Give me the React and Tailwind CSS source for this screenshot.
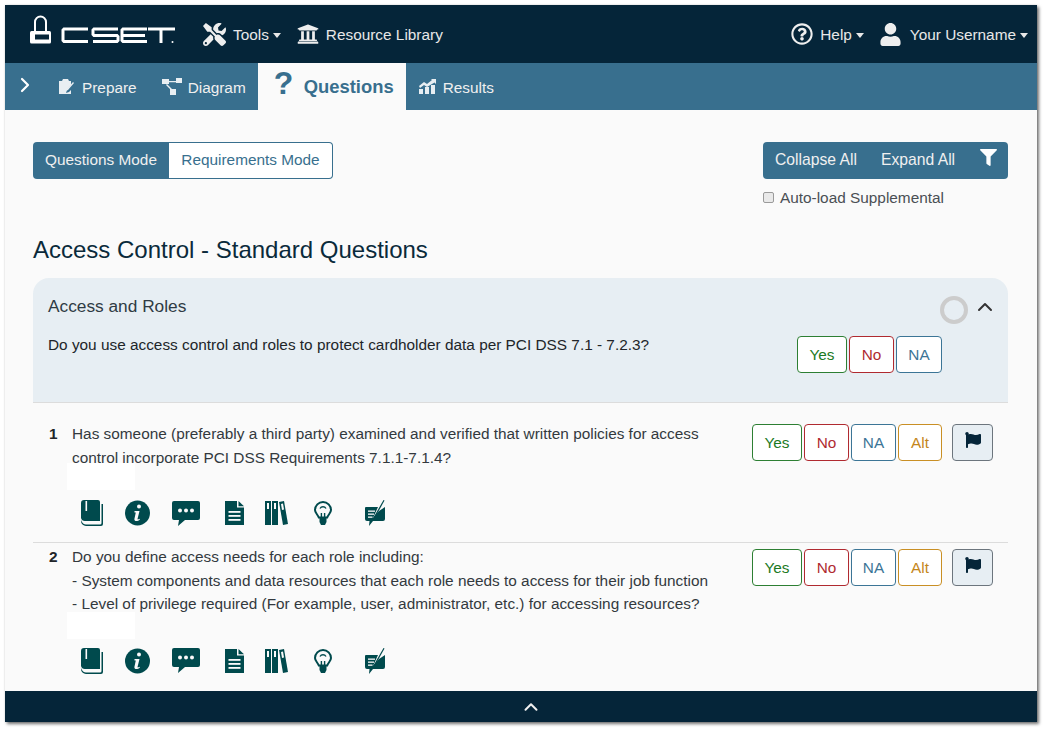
import { ChevronRight, ChevronUp } from "lucide-react";
import { FaTools, FaUniversity, FaRegQuestionCircle, FaUser, FaFilter, FaFlag } from "react-icons/fa";

const Caret = () => (
  <span className="ml-[4px] mt-[2px] inline-block h-0 w-0 border-x-[4.5px] border-t-[5px] border-x-transparent border-t-current" />
);

const CsetLogo = () => (
  <svg width="146" height="32" viewBox="0 0 146 32" fill="none" stroke="white" aria-label="CSET">
    <path d="M5 16V7a5.500 5.500 0 0 1 11 0v9" strokeWidth="2" />
    <rect x="0" y="16" width="21" height="12.500" rx="1.500" fill="white" stroke="none" />
    <rect x="5" y="19.500" width="14" height="5" fill="#052539" stroke="none" />
    <polyline points="58,14 34,14 33,15 33,25.500 34,26.500 58,26.500" strokeWidth="3" />
    <polyline points="88,14 64,14 63,15 63,19.500 64,20.500 87,20.500 88,21.500 88,25.500 87,26.500 63,26.500" strokeWidth="3" />
    <polyline points="117,14 93,14 92,15 92,25.500 93,26.500 117,26.500" strokeWidth="3" />
    <line x1="92" y1="20.500" x2="115" y2="20.500" strokeWidth="3" />
    <line x1="118" y1="14" x2="145" y2="14" strokeWidth="3" />
    <line x1="131" y1="14" x2="131" y2="28" strokeWidth="3" />
    <circle cx="142.500" cy="27" r="1" fill="white" stroke="none" />
  </svg>
);

const PrepareIcon = () => (
  <svg width="16" height="16" viewBox="0 0 16 16" fill="#e8eef2">
    <path d="M1 2h3l1-2h5l1 2h2v4l-4 5-1 3 3-1 2-2v4H1z" />
    <path d="M15 3l1 1-6 7-2 1 1-2z" />
  </svg>
);

const DiagramIcon = () => (
  <svg width="20" height="17" viewBox="0 0 20 17" fill="#e8eef2">
    <rect x="0" y="1" width="7" height="5" />
    <rect x="14" y="0" width="6" height="5" />
    <rect x="8" y="11" width="6" height="6" />
    <path d="M7 3h7v1.200H7zM5 6l5 5-1 1-5-5z" />
  </svg>
);

const ResultsIcon = () => (
  <svg width="17" height="15" viewBox="0 0 17 15" fill="#e8eef2">
    <rect x="0" y="10" width="4" height="5" />
    <rect x="6" y="8" width="4" height="7" />
    <rect x="12" y="6" width="4" height="9" />
    <path d="M0 7l5-4 3 2 5-4-1-1h5v5l-1.500-1.500L8 8 5 6 1 9z" />
  </svg>
);

const BookIcon = () => (
  <svg width="22" height="26" viewBox="0 0 22 26" fill="#004a4d">
    <path d="M3 0h14a2 2 0 0 1 2 2v19H4a4 4 0 0 1-4-3V3a3 3 0 0 1 3-3z" />
    <rect x="4.500" y="1" width="1.600" height="10" fill="#fafafa" />
    <path d="M20.500 4h1.500v20a2 2 0 0 1-2 2H5a5 5 0 0 1-5-5v-1c1 3 3 4.500 5 4.500h14a1.500 1.500 0 0 0 1.500-1.500z" />
  </svg>
);

const InfoIcon = () => (
  <svg width="25" height="26" viewBox="0 0 25 26">
    <circle cx="12.500" cy="13" r="12.500" fill="#004a4d" />
    <circle cx="14" cy="6.500" r="2" fill="#fafafa" />
    <path d="M9.500 11h5l-2 8c0 .6.500.8 2-.2l.4.6c-2 2-5.800 2.600-5.500-.4l1.400-6.500H9.500z" fill="#fafafa" />
  </svg>
);

const ChatIcon = () => (
  <svg width="28" height="25" viewBox="0 0 28 25" fill="#004a4d">
    <path d="M2 0h24a2 2 0 0 1 2 2v15a2 2 0 0 1-2 2H13l-7 6 1-6H2a2 2 0 0 1-2-2V2a2 2 0 0 1 2-2z" />
    <circle cx="8" cy="9.500" r="2" fill="#fafafa" />
    <circle cx="14" cy="9.500" r="2" fill="#fafafa" />
    <circle cx="20" cy="9.500" r="2" fill="#fafafa" />
  </svg>
);

const DocIcon = () => (
  <svg width="19" height="24" viewBox="0 0 19 24" fill="#004a4d">
    <path d="M0 0h12v6.500h7V24H0z" />
    <path d="M13.500 0L19 5.200h-5.500z" />
    <rect x="3.500" y="10" width="12" height="1.800" fill="#fafafa" />
    <rect x="3.500" y="14" width="12" height="1.800" fill="#fafafa" />
    <rect x="3.500" y="18" width="12" height="1.800" fill="#fafafa" />
  </svg>
);

const BooksIcon = () => (
  <svg width="23" height="24" viewBox="0 0 23 24" fill="#004a4d">
    <rect x="0" y="0" width="6" height="24" />
    <rect x="7" y="0" width="6" height="24" />
    <path d="M14 1l5-1 4 23-5 1z" />
    <rect x="2" y="2" width="2" height="6" fill="#fafafa" />
    <rect x="9" y="2" width="2" height="6" fill="#fafafa" />
    <path d="M16 3l2-.4 1 6-2 .4z" fill="#fafafa" />
  </svg>
);

const BulbIcon = () => (
  <svg width="18" height="24" viewBox="0 0 18 24">
    <path d="M9 1a8 8 0 0 1 8 8c0 3-2.800 4.500-3.800 7.500H4.800C3.800 13.500 1 12 1 9a8 8 0 0 1 8-8z" fill="none" stroke="#004a4d" strokeWidth="2" />
    <path d="M6 7.500a3.500 3.500 0 0 1 6 0" fill="none" stroke="#004a4d" strokeWidth="1.400" />
    <rect x="6.700" y="12" width="1.400" height="5" fill="#004a4d" />
    <rect x="9.900" y="12" width="1.400" height="5" fill="#004a4d" />
    <path d="M5.500 17h7v4l-1.500 3H7l-1.500-3z" fill="#004a4d" />
  </svg>
);

const NoteIcon = () => (
  <svg width="20" height="26" viewBox="0 0 20 26" fill="#004a4d">
    <path d="M1 7h12l-5 11 6-7 6-4v12a2 2 0 0 1-2 2H8l-4 5 .5-5H2a2 2 0 0 1-2-2V8a1 1 0 0 1 1-1z" />
    <path d="M18.500 0l1 .6-10 18-1.500 1.400.200-2z" />
    <rect x="3" y="10.500" width="7" height="1.300" fill="#fafafa" />
    <rect x="3" y="13.500" width="6" height="1.300" fill="#fafafa" />
    <rect x="3" y="16.500" width="4.500" height="1.300" fill="#fafafa" />
  </svg>
);

const IconRow = () => (
  <div className="flex h-[26px] items-center">
    <span className="ml-[9px]"><BookIcon /></span>
    <span className="ml-[22px]"><InfoIcon /></span>
    <span className="ml-[22px]"><ChatIcon /></span>
    <span className="ml-[25px]"><DocIcon /></span>
    <span className="ml-[21px]"><BooksIcon /></span>
    <span className="ml-[26px]"><BulbIcon /></span>
    <span className="ml-[33px]"><NoteIcon /></span>
  </div>
);

const AnswerButtons = () => (
  <div className="flex h-[37px]">
    <button className="w-[50px] rounded-[4px] border border-[#2d7f33] bg-white text-[#1c7a24]">Yes</button>
    <button className="ml-[2px] w-[45px] rounded-[4px] border border-[#b02a30] bg-white text-[#b02a30]">No</button>
    <button className="ml-[2px] w-[45px] rounded-[4px] border border-[#3c7596] bg-white text-[#3c7596]">NA</button>
    <button className="ml-[2px] w-[44px] rounded-[4px] border border-[#c98f24] bg-white text-[#c4861a]">Alt</button>
    <button className="ml-[10px] flex w-[41px] items-center justify-center rounded-[4px] border border-[#6c757d] bg-[#e7eef3] pb-[5px] text-[#052539]">
      <FaFlag size={16} />
    </button>
  </div>
);

export default function App() {
  return (
    <div className="h-[731px] w-full overflow-hidden bg-white p-[5px] font-['Liberation_Sans',Arial,sans-serif] text-[15.360px]">
      <div className="flex h-[717px] w-[1032px] flex-col overflow-hidden bg-[#fafafa] shadow-[2px_2px_3px_rgba(0,0,0,0.55),0_0_2px_rgba(0,0,0,0.12)]">
        {/* top bar */}
        <div className="flex h-[58px] flex-none items-center bg-[#052539] text-[#e8e8e8]">
          <div className="ml-[25px] mb-[6px]"><CsetLogo /></div>
          <div className="ml-[27px] flex items-center">
            <FaTools size={23} className="text-[#eeeeee]" />
            <span className="ml-[7px] mt-[2px]">Tools</span>
            <Caret />
          </div>
          <div className="ml-[16px] flex items-center">
            <FaUniversity size={22} className="text-[#eeeeee]" />
            <span className="ml-[7px] mt-[2px]">Resource Library</span>
          </div>
          <div className="ml-auto flex items-center">
            <FaRegQuestionCircle size={22} className="text-[#eeeeee]" />
            <span className="ml-[7px] mt-[2px]">Help</span>
            <Caret />
          </div>
          <div className="ml-[15px] mr-[9px] flex items-center">
            <FaUser size={23} className="text-[#eeeeee]" />
            <span className="ml-[8px] mt-[2px]">Your Username</span>
            <Caret />
          </div>
        </div>

        {/* step nav */}
        <div className="flex h-[47px] flex-none items-center bg-[#386f8e] text-[#f0f0f0]">
          <ChevronRight size={24} strokeWidth={2.2} className="ml-[8px] mb-[4px] text-white" />
          <div className="ml-[21px] flex items-center">
            <PrepareIcon />
            <span className="ml-[8px] mt-[2px]">Prepare</span>
          </div>
          <div className="ml-[25px] flex items-center">
            <DiagramIcon />
            <span className="ml-[6px] mt-[2px]">Diagram</span>
          </div>
          <div className="ml-[12px] flex h-full w-[148px] items-center bg-[#fafafa] pl-[16px] font-bold text-[#386f8e]">
            <span className="mb-[7px] w-[30px] text-[32px] leading-none">?</span>
            <span className="text-[18.400px]">Questions</span>
          </div>
          <div className="ml-[13px] flex items-center">
            <ResultsIcon />
            <span className="ml-[7px] mt-[2px]">Results</span>
          </div>
        </div>

        {/* content */}
        <div className="min-h-0 flex-1 overflow-hidden px-[28px] pt-[32px] text-[#212529]">
          <div className="flex items-start justify-between pr-[1px]">
            <div className="flex h-[37px]">
              <button className="w-[136px] rounded-l-[4px] bg-[#386f8e] pb-[2px] text-[#f0f0f0]">Questions Mode</button>
              <button className="w-[164px] rounded-r-[4px] border border-l-0 border-[#386f8e] bg-white pb-[2px] text-[#386f8e]">Requirements Mode</button>
            </div>
            <div>
              <div className="flex h-[37px] w-[245px] items-center rounded-[4px] bg-[#386f8e] pb-[2px] pl-[12px] text-[15.700px] text-[#f0f0f0]">
                <span>Collapse All</span>
                <span className="ml-[24px]">Expand All</span>
                <FaFilter size={17} className="ml-[25px] mb-[5px] text-white" />
              </div>
              <label className="mt-[7px] flex items-center text-[#4a4f54]">
                <span className="h-[11px] w-[11px] rounded-[2px] border border-[#9a9a9a] bg-[#e9e9e9]" />
                <span className="ml-[6px]">Auto-load Supplemental</span>
              </label>
            </div>
          </div>

          <h2 className="mt-[26px] text-[24px] leading-[29px] text-[#0a2a3b]">Access Control - Standard Questions</h2>

          {/* group panel */}
          <div className="mt-[14px] mr-[1px] h-[125px] rounded-t-[16px] border-b border-[#dcdcdc] bg-[#e7eef3] pl-[15px]">
            <div className="flex h-[56px] items-start pt-[17px]">
              <span className="text-[17.300px] leading-[22px] text-[#2f3b44]">Access and Roles</span>
              <span className="ml-auto mt-[1px] h-[28px] w-[28px] rounded-full border-[4px] border-[#cccccc]" />
              <ChevronUp size={24} strokeWidth={2} className="ml-[5px] mr-[11px] text-[#333333]" />
            </div>
            <div className="flex items-start">
              <span className="w-[749px] pt-[1px] leading-[20px]">Do you use access control and roles to protect cardholder data per PCI DSS 7.1 - 7.2.3?</span>
              <div className="mt-[2px] flex h-[37px]">
                <button className="w-[50px] rounded-[4px] border border-[#2d7f33] bg-white text-[#1c7a24]">Yes</button>
                <button className="ml-[2px] w-[45px] rounded-[4px] border border-[#b02a30] bg-white text-[#b02a30]">No</button>
                <button className="ml-[2px] w-[46px] rounded-[4px] border border-[#3c7596] bg-white text-[#3c7596]">NA</button>
              </div>
            </div>
          </div>

          {/* question 1 */}
          <div className="mr-[1px] flex border-b border-[#dcdcdc] pb-[16px] pl-[16px] pt-[19px]">
            <span className="w-[23px] font-bold leading-[23.500px]">1</span>
            <div className="w-[680px] flex-none">
              <div className="w-[640px] leading-[23.500px] text-[#33393e]">
                Has someone (preferably a third party) examined and verified that written policies for access control incorporate PCI DSS Requirements 7.1.1-7.1.4?
              </div>
              <div className="ml-[-5px] mt-[-6px] h-[27px] w-[68px] bg-white" />
              <div className="mt-[10px]"><IconRow /></div>
            </div>
            <div className="mt-[2px]"><AnswerButtons /></div>
          </div>

          {/* question 2 */}
          <div className="mr-[1px] flex pl-[16px] pt-[2px]">
            <span className="w-[23px] font-bold leading-[23.500px]">2</span>
            <div className="w-[680px] flex-none">
              <div className="leading-[23.500px] text-[#33393e]">
                <div>Do you define access needs for each role including:</div>
                <div>- System components and data resources that each role needs to access for their job function</div>
                <div>- Level of privilege required (For example, user, administrator, etc.) for accessing resources?</div>
              </div>
              <div className="ml-[-5px] mt-[-4px] h-[27px] w-[68px] bg-white" />
              <div className="mt-[9px]"><IconRow /></div>
            </div>
            <div className="mt-[4px]"><AnswerButtons /></div>
          </div>
        </div>

        {/* bottom bar */}
        <div className="flex h-[31px] flex-none items-center justify-center bg-[#052539] pl-[20px]">
          <ChevronUp size={22} strokeWidth={2.2} className="text-[#f0f0f0]" />
        </div>
      </div>
    </div>
  );
}
